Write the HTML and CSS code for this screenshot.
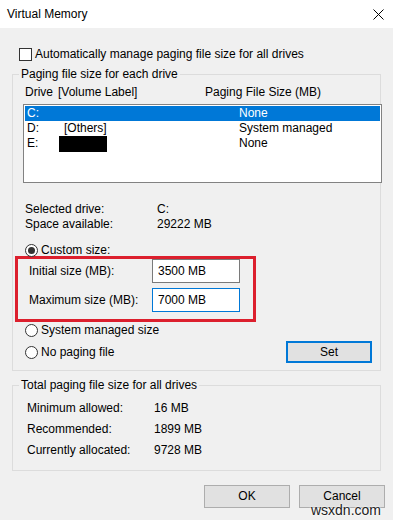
FILE: index.html
```html
<!DOCTYPE html>
<html lang="en">
<head>
  <meta charset="UTF-8" />
  <meta name="viewport" content="width=device-width, initial-scale=1.0" />
  <title>Virtual Memory</title>
  <link rel="stylesheet" href="styles.css">
</head>
<body>
  <div class="titlebar">
    <span class="title">Virtual Memory</span>
    <svg class="close" width="11" height="11" viewBox="0 0 11 11"><path d="M0.5 0.5L10.5 10.5M10.5 0.5L0.5 10.5" stroke="#000" stroke-width="1" fill="none"/></svg>
  </div>

  <div class="dialog">
    <label class="check-row"><span class="checkbox"></span>Automatically manage paging file size for all drives</label>

    <fieldset class="group group-drives">
      <legend>Paging file size for each drive</legend>
      <div class="list-head">
        <span class="head-drive">Drive</span>
        <span class="head-label">[Volume Label]</span>
        <span>Paging File Size (MB)</span>
      </div>
      <ul class="drive-list">
        <li class="selected"><span class="col-drive">C:</span><span class="col-label"></span><span>None</span></li>
        <li><span class="col-drive">D:</span><span class="col-label">[Others]</span><span>System managed</span></li>
        <li><span class="col-drive">E:</span><span class="col-label"><span class="redacted"></span></span><span>None</span></li>
      </ul>

      <div class="info">
        <div class="info-row"><span class="info-key">Selected drive:</span><span>C:</span></div>
        <div class="info-row"><span class="info-key">Space available:</span><span>29222 MB</span></div>
      </div>

      <label class="radio-row custom"><span class="radio checked"></span>Custom size:</label>

      <div class="highlight">
        <div class="size-row"><span class="size-label">Initial size (MB):</span><input class="size-input" value="3500 MB"></div>
        <div class="size-row"><span class="size-label">Maximum size (MB):</span><input class="size-input focused" value="7000 MB"></div>
      </div>

      <label class="radio-row system"><span class="radio"></span>System managed size</label>
      <div class="set-row">
        <label class="radio-row"><span class="radio"></span>No paging file</label>
        <button class="btn btn-set">Set</button>
      </div>
    </fieldset>

    <fieldset class="group group-total">
      <legend>Total paging file size for all drives</legend>
      <div class="total-row"><span class="total-key">Minimum allowed:</span><span>16 MB</span></div>
      <div class="total-row"><span class="total-key">Recommended:</span><span>1899 MB</span></div>
      <div class="total-row"><span class="total-key">Currently allocated:</span><span>9728 MB</span></div>
    </fieldset>

    <div class="actions">
      <button class="btn">OK</button>
      <button class="btn">Cancel</button>
    </div>

    <span class="watermark">wsxdn.com</span>
  </div>
</body>
</html>
```

FILE: styles.css
```css
body {
  margin: 0;
  width: 393px;
  height: 520px;
  overflow: hidden;
  background: #f0f0f0;
  font-family: "Liberation Sans", Arial, sans-serif;
  font-size: 12px;
  line-height: 15px;
  color: #000;
}
.titlebar {
  height: 28px;
  background: #fff;
  display: flex;
  align-items: center;
  justify-content: space-between;
  padding: 0 9px 0 7px;
}
.dialog {
  position: relative;
  height: 492px;
  padding: 19px 12px 0 12px;
  box-sizing: border-box;
}
.check-row {
  display: flex;
  align-items: center;
  height: 15px;
  padding-left: 7px;
  gap: 3px;
}
.checkbox {
  width: 11px;
  height: 11px;
  border: 1px solid #333;
  background: #fff;
}
.group {
  margin: 5px 0 0 0;
  min-width: 0;
  border: 1px solid #dcdcdc;
  padding: 3px 8px 7px 12px;
}
.group legend {
  margin-left: -6px;
  padding: 0 2px;
  line-height: 15px;
}
.list-head {
  display: flex;
  height: 15px;
}
.head-drive {
  margin-right: 5px;
}
.head-label {
  width: 147px;
}
.drive-list {
  list-style: none;
  margin: 4px 0 0 -2px;
  width: 359px;
  height: 79px;
  box-sizing: border-box;
  border: 1px solid #828282;
  background: #fff;
  padding: 1px;
}
.drive-list li {
  display: flex;
  height: 15px;
  padding-left: 2px;
}
.drive-list li.selected {
  background: #0078d7;
  color: #fff;
}
.col-drive {
  width: 37px;
}
.col-label {
  width: 175px;
}
.redacted {
  display: inline-block;
  width: 48px;
  height: 16px;
  margin-left: -5px;
  background: #000;
  vertical-align: top;
}
.info {
  margin-top: 19px;
}
.info-row {
  display: flex;
  height: 15px;
}
.info-key {
  width: 132px;
}
.radio-row {
  display: flex;
  align-items: center;
  gap: 3px;
  height: 14px;
}
.custom {
  margin-top: 11px;
}
.radio {
  width: 11px;
  height: 11px;
  border: 1px solid #333;
  border-radius: 50%;
  background: #fff;
  display: flex;
  align-items: center;
  justify-content: center;
}
.radio.checked::after {
  content: "";
  width: 7px;
  height: 7px;
  border-radius: 50%;
  background: #333;
}
.highlight {
  margin: -1px 0 0 -10px;
  width: 241px;
  box-sizing: border-box;
  border: 3px solid #dc1f2d;
  padding: 0 0 7px 11px;
  display: flex;
  flex-direction: column;
  gap: 5px;
}
.size-row {
  display: flex;
  align-items: center;
  height: 24px;
}
.size-label {
  width: 123px;
}
.size-input {
  width: 88px;
  height: 24px;
  box-sizing: border-box;
  border: 1px solid #7a7a7a;
  background: #fff;
  font: inherit;
  padding: 0 5px;
  margin: 0;
  color: #000;
}
.size-input.focused {
  border-color: #0078d7;
}
.system {
  margin-top: 1px;
}
.set-row {
  display: flex;
  align-items: center;
  justify-content: space-between;
  margin-top: 4px;
}
.btn {
  width: 86px;
  height: 23px;
  background: #e1e1e1;
  border: 1px solid #adadad;
  font: inherit;
  color: #000;
  padding: 0;
  margin: 0;
}
.btn-set {
  height: 22px;
  border: 2px solid #0078d7;
}
.group-total {
  margin-top: 7px;
  padding: 8px 8px 12px 14px;
}
.group-total legend {
  margin-left: -8px;
}
.total-row {
  display: flex;
  height: 15px;
  margin-bottom: 6px;
}
.total-row:last-child {
  margin-bottom: 0;
}
.total-key {
  width: 127px;
}
.actions {
  display: flex;
  justify-content: flex-end;
  gap: 9px;
  margin: 14px -4px 0 0;
}
.watermark {
  position: absolute;
  right: 12px;
  bottom: 2px;
  font-size: 14px;
  line-height: 16px;
  color: #222;
  text-shadow: 0 0 2px #fff, 0 0 2px #fff;
}
```
